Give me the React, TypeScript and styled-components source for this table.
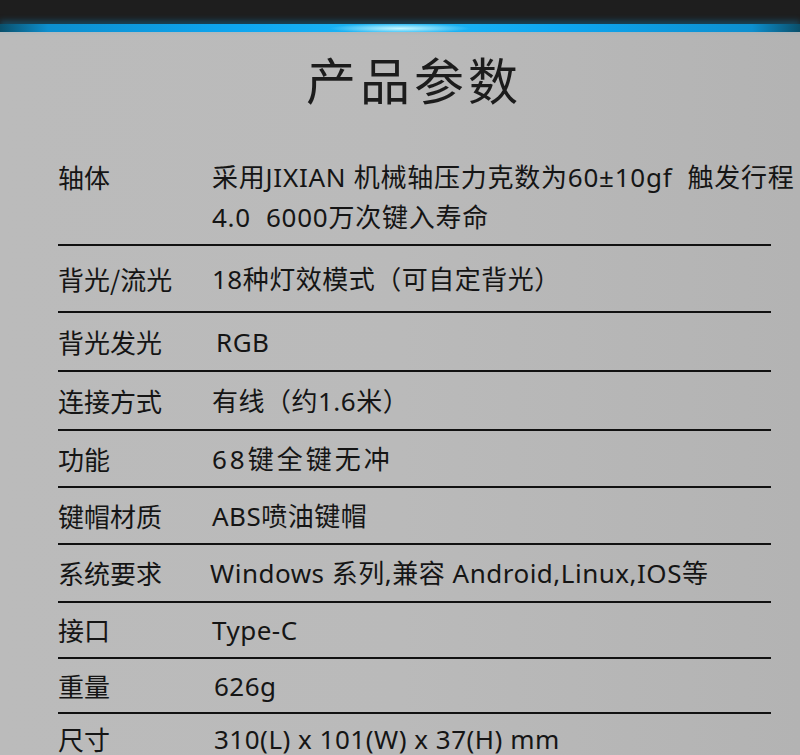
import React from 'react';
import styled, { createGlobalStyle } from 'styled-components';

const SPECS = [
  { label: '轴体', value: ['采用JIXIAN 机械轴压力克数为60±10gf  触发行程', '4.0  6000万次键入寿命'], height: 96, spacing: 0.75 },
  { label: '背光/流光', value: ['18种灯效模式（可自定背光）'], height: 67 },
  { label: '背光发光', value: ['RGB'], height: 59, shift: 4 },
  { label: '连接方式', value: ['有线（约1.6米）'], height: 59 },
  { label: '功能', value: ['68键全键无冲'], height: 57, spacing: 3 },
  { label: '键帽材质', value: ['ABS喷油键帽'], height: 57 },
  { label: '系统要求', value: ['Windows 系列,兼容 Android,Linux,IOS等'], height: 58, shift: -2 },
  { label: '接口', value: ['Type-C'], height: 56 },
  { label: '重量', value: ['626g'], height: 55, shift: 2 },
  { label: '尺寸', value: ['310(L) x 101(W) x 37(H) mm'], height: 50, last: true, shift: 2 },
];

const GlobalStyle = createGlobalStyle`
  html, body {
    margin: 0;
    padding: 0;
    background: #b8b8b8;
  }
  body {
    font-family: "Noto Sans", "Noto Sans CJK SC", sans-serif;
    color: #151515;
  }
`;

const Page = styled.div`
  width: 800px;
  height: 755px;
  overflow: hidden;
  background: linear-gradient(90deg, #bbbbbb 0%, #bababa 50%, #b3b3b3 100%);
`;

const TopBar = styled.header`
  height: 32px;
  background: #1e1e1e;
  display: flex;
  flex-direction: column;
  justify-content: flex-end;
`;

const Glow = styled.div`
  height: 8px;
  background:
    radial-gradient(ellipse 70px 5px at 50% 55%, rgba(210, 250, 255, 0.95), rgba(120, 220, 255, 0) 100%),
    linear-gradient(90deg, #0a4f6a 0%, #0d8fcf 6%, #0ea6f0 30%, #20b8f6 50%, #0ea6f0 70%, #0d8fcf 94%, #0a4f6a 100%);
  box-shadow: 0 -3px 6px rgba(14, 160, 230, 0.35);
`;

const Title = styled.h1`
  margin: 0;
  padding: 16px 0 0 28px;
  height: 96px;
  box-sizing: border-box;
  text-align: center;
  font-family: "Noto Sans CJK SC", sans-serif;
  font-weight: 400;
  font-size: 50px;
  line-height: 60px;
  letter-spacing: 4px;
  color: #1c1c1c;
`;

const Table = styled.section`
  margin: 22px 29px 0 58px;
`;

const Row = styled.div<{ $height: number; $last?: boolean }>`
  display: flex;
  align-items: center;
  height: ${(p) => p.$height}px;
  box-sizing: border-box;
  border-bottom: ${(p) => (p.$last ? 'none' : '2px solid #111')};
  font-size: 26px;
  line-height: 40px;
`;

const Label = styled.div<{ $top?: boolean }>`
  width: 154px;
  flex-shrink: 0;
  font-family: "Noto Sans CJK SC", sans-serif;
  align-self: ${(p) => (p.$top ? 'flex-start' : 'auto')};
  margin-top: ${(p) => (p.$top ? 7 : 0)}px;
`;

const Value = styled.div<{ $spacing?: number; $shift?: number }>`
  flex: 1;
  margin-left: ${(p) => p.$shift || 0}px;
  letter-spacing: ${(p) => (p.$spacing ?? 0.5)}px;
  white-space: pre;
`;

const App = () => {
  return (
    <Page>
      <GlobalStyle />
      <TopBar>
        <Glow />
      </TopBar>
      <Title>产品参数</Title>
      <Table>
        {SPECS.map((item) => (
          <Row key={item.label} $height={item.height} $last={item.last}>
            <Label $top={item.value.length > 1}>{item.label}</Label>
            <Value $spacing={item.spacing} $shift={item.shift}>
              {item.value.map((line) => (
                <div key={line}>{line}</div>
              ))}
            </Value>
          </Row>
        ))}
      </Table>
    </Page>
  );
};

export default App;
